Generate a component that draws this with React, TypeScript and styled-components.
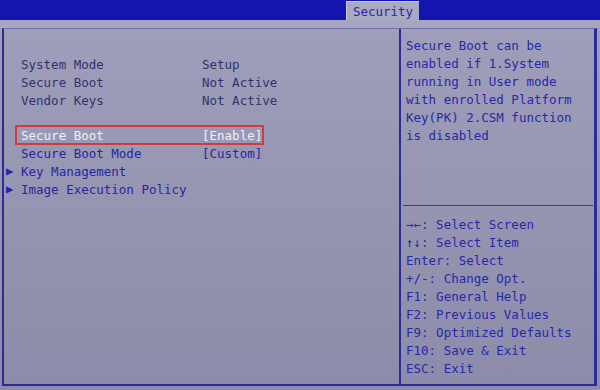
import React from "react";
import styled, { createGlobalStyle } from "styled-components";

const Global = createGlobalStyle`
  html, body { margin: 0; padding: 0; }
  body {
    width: 600px;
    height: 390px;
    overflow: hidden;
    background: #9a9ab6;
    font-family: "DejaVu Sans Mono", "Liberation Mono", monospace;
  }
`;

const Screen = styled.div`
  width: 600px;
  height: 390px;
  display: flex;
  flex-direction: column;
  background: linear-gradient(#a0a0bc, #9494b0 60%, #8c8caa);
`;

const TopBar = styled.div`
  height: 20px;
  flex: none;
  display: flex;
  align-items: flex-end;
  background: #1414ae;
  padding-left: 346px;
`;

const Tab = styled.div`
  height: 18px;
  width: 72px;
  display: flex;
  align-items: center;
  justify-content: center;
  background: #a9a9c2;
  color: #2828a0;
  font-size: 12.5px;
  border-top: 1px solid #c8c8dc;
  border-left: 1px solid #c8c8dc;
`;

const Gap = styled.div`
  height: 8px;
  flex: none;
  background: #a6a6c0;
`;

const Frame = styled.div`
  flex: 1;
  margin: 0 3px 4px 2px;
  border-top: 1px solid #7070a8;
  border-left: 2px solid #2c2c98;
  border-right: 3px solid #2c2c98;
  border-bottom: 2px solid #2c2c98;
  display: flex;
`;

const LeftPane = styled.div`
  width: 397px;
  flex: none;
  padding-top: 26px;
  box-sizing: border-box;
  border-right: 2px solid #2c2c98;
`;

const Row = styled.div<{ $tone?: "dim" | "blue" | "sel" }>`
  position: relative;
  height: 18px;
  display: flex;
  align-items: center;
  font-size: 12.5px;
  white-space: pre;
  color: ${(p) =>
    p.$tone === "sel" ? "#f0f0f8" : p.$tone === "blue" ? "#2626a4" : "#32326a"};
`;

const Spacer = styled.div`
  height: 17px;
`;

const Marker = styled.span`
  width: 17px;
  flex: none;
  padding-left: 2px;
  box-sizing: border-box;
  font-size: 12px;
  color: #2626a4;
`;

const Label = styled.span`
  width: 181px;
  flex: none;
`;

const Value = styled.span``;

const SelBox = styled.div`
  position: absolute;
  left: 11px;
  top: -1px;
  width: 249px;
  height: 20px;
  border: 2px solid #d43a3a;
  box-sizing: border-box;
`;

const RightPane = styled.div`
  flex: 1;
  display: flex;
  flex-direction: column;
  color: #2828aa;
  font-size: 12.5px;
`;

const HelpText = styled.div`
  height: 176px;
  padding: 8px 0 0 5px;
  box-sizing: border-box;
`;

const Line = styled.div`
  height: 18px;
  line-height: 18px;
  white-space: pre;
`;

const Rule = styled.div`
  height: 1px;
  margin: 0 1px 0 2px;
  background: #3a3a9c;
`;

const Keys = styled.div`
  padding: 10px 0 0 5px;
`;

const info = [
  ["System Mode", "Setup"],
  ["Secure Boot", "Not Active"],
  ["Vendor Keys", "Not Active"],
];

const help = [
  "Secure Boot can be",
  "enabled if 1.System",
  "running in User mode",
  "with enrolled Platform",
  "Key(PK) 2.CSM function",
  "is disabled",
];

const keys = [
  "\u2192\u2190: Select Screen",
  "\u2191\u2193: Select Item",
  "Enter: Select",
  "+/-: Change Opt.",
  "F1: General Help",
  "F2: Previous Values",
  "F9: Optimized Defaults",
  "F10: Save & Exit",
  "ESC: Exit",
];

export default function App() {
  return (
    <Screen>
      <Global />
      <TopBar>
        <Tab>Security</Tab>
      </TopBar>
      <Gap />
      <Frame>
        <LeftPane>
          {info.map(([l, v]) => (
            <Row key={l} $tone="dim">
              <Marker />
              <Label>{l}</Label>
              <Value>{v}</Value>
            </Row>
          ))}
          <Spacer />
          <Row $tone="sel">
            <SelBox />
            <Marker />
            <Label>Secure Boot</Label>
            <Value>[Enable]</Value>
          </Row>
          <Row $tone="blue">
            <Marker />
            <Label>Secure Boot Mode</Label>
            <Value>[Custom]</Value>
          </Row>
          <Row $tone="blue">
            <Marker>▶</Marker>
            <Label>Key Management</Label>
          </Row>
          <Row $tone="blue">
            <Marker>▶</Marker>
            <Label>Image Execution Policy</Label>
          </Row>
        </LeftPane>
        <RightPane>
          <HelpText>
            {help.map((t) => (
              <Line key={t}>{t}</Line>
            ))}
          </HelpText>
          <Rule />
          <Keys>
            {keys.map((t) => (
              <Line key={t}>{t}</Line>
            ))}
          </Keys>
        </RightPane>
      </Frame>
    </Screen>
  );
}
